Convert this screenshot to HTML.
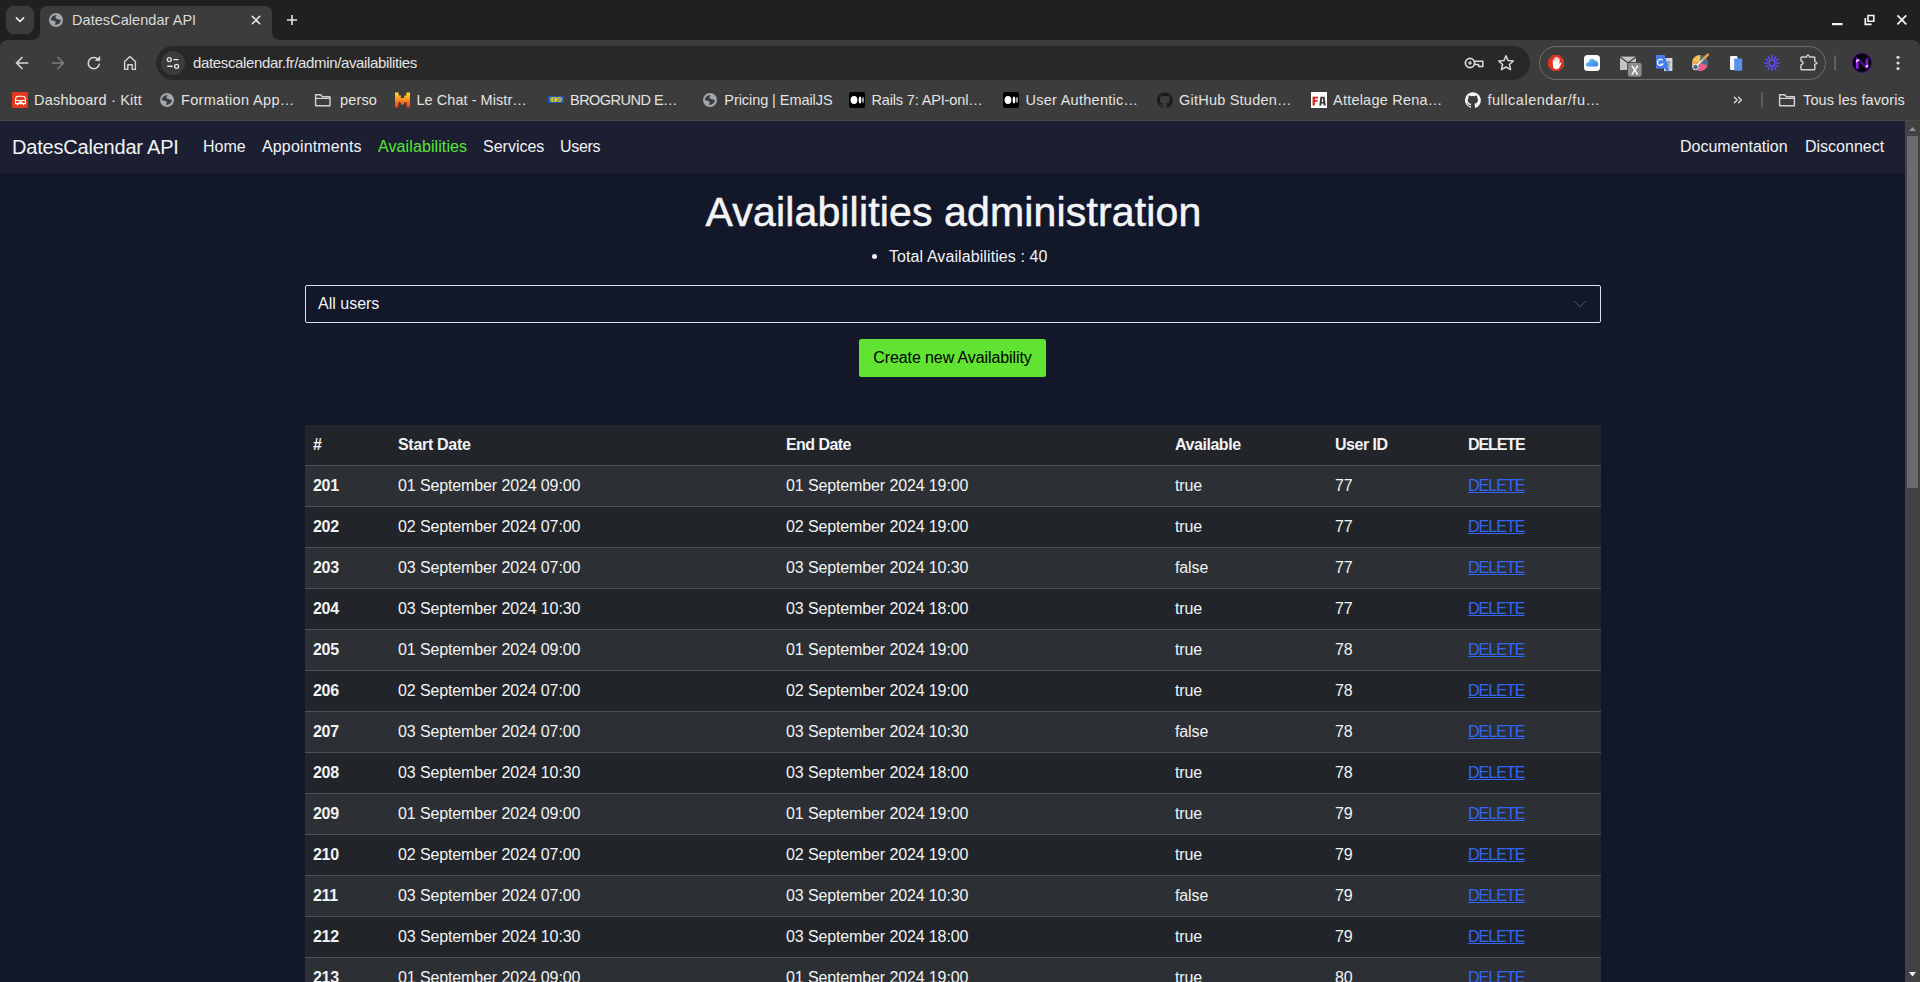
<!DOCTYPE html>
<html><head><meta charset="utf-8">
<style>
*{box-sizing:border-box;margin:0;padding:0}
html,body{width:1920px;height:982px;overflow:hidden;background:#1f2020;font-family:"Liberation Sans",sans-serif}
.abs{position:absolute}
.ct{position:absolute;line-height:20px;white-space:nowrap;font-family:"Liberation Sans",sans-serif}
#page{position:absolute;left:0;top:121px;width:1905px;height:861px;background:#12172a;overflow:hidden;color:#fff}
#nav{position:absolute;left:0;top:0;width:1905px;height:52px;background:#1c1f32}
#scroll{position:absolute;left:1905px;top:121px;width:15px;height:861px;background:#424242}
.nl{position:absolute;top:14px;font-size:16px;line-height:24px;color:#f1f3f5;white-space:nowrap}
.nl.brand{left:12px;top:12px;font-size:20px;line-height:28px;letter-spacing:-0.2px}
table{border-collapse:collapse;position:absolute;left:305px;top:304px;width:1296px;font-size:16px;color:#f1f3f5;table-layout:fixed}
td,th{height:41px;padding:0 7px 0 8px;text-align:left;border-bottom:1px solid #4d5154;white-space:nowrap;vertical-align:middle;letter-spacing:-0.12px}
th{font-weight:700;background:#212529;height:40px;letter-spacing:-0.3px}
tr:nth-child(odd) td{background:#2c3034}
tr:nth-child(even) td{background:#212529}
td:first-child{font-weight:700;letter-spacing:-0.3px}
a.del{color:#3466f6;text-decoration:underline;letter-spacing:-0.95px}
#title{position:absolute;left:1px;width:1905px;top:63px;text-align:center;font-size:41px;line-height:56px;color:#f3f4f6;-webkit-text-stroke:0.55px #f3f4f6;letter-spacing:0.15px}
#total{position:absolute;left:889px;top:124px;font-size:16px;line-height:24px;color:#f1f3f5;white-space:nowrap;letter-spacing:0.09px}
#total .bullet{position:absolute;left:-17px;top:9px;width:5px;height:5px;border-radius:50%;background:#f1f3f5}
#select{position:absolute;left:305px;top:164px;width:1296px;height:38px;border:1px solid #dee2e6;border-radius:2px;padding:0 12px;font-size:16px;line-height:36px;color:#f1f3f5}
#select .chev{position:absolute;right:13px;top:14px}
#btn{position:absolute;left:859px;top:218px;width:187px;height:38px;background:#61e332;border-radius:2.5px;text-align:center;font-size:16px;line-height:38px;color:#000;letter-spacing:-0.1px}

</style></head><body>

<svg class="abs" style="left:0;top:0" width="1920" height="121" viewBox="0 0 1920 121">
 <!-- tab strip chevron button -->
 <rect x="6" y="6" width="28" height="28" rx="8" fill="#3c3c3c"/>
 <path d="M16.4 17.9 L20 21.5 L23.6 17.9" fill="none" stroke="#f0f0f0" stroke-width="1.6" stroke-linecap="round" stroke-linejoin="round"/>
 <!-- active tab with flares -->
 <path d="M32 40 Q40 40 40 32 L40 14 Q40 6 48 6 L264 6 Q272 6 272 14 L272 32 Q272 40 280 40 Z" fill="#3c3c3c"/>
 <!-- globe -->
 <circle cx="56" cy="20" r="7" fill="#a3a8ae"/>
 <g transform="translate(0,0)"><circle cx="56" cy="20" r="5.6" fill="#a3a8ae"/><path d="M50.9 20.2 C51.0 17.5 52.5 15.3 56.9 15.0 C56.2 15.8 55.4 16.6 55.3 17.6 C55.4 18.8 57.5 19.2 58.6 19.4 C59.8 19.6 60.6 19.8 61.0 20.3 C60.6 22.8 58.4 24.8 55.2 25.1 C54.6 24.2 55.6 23.4 55.8 22.6 C56.0 21.2 54.0 20.6 52.8 20.4 Z" fill="#3c3c3c"/></g>
 <!-- tab close -->
 <path d="M252.4 16.4 L259.6 23.6 M259.6 16.4 L252.4 23.6" stroke="#e8e8e8" stroke-width="1.5" stroke-linecap="round"/>
 <!-- new tab plus -->
 <path d="M292 14.9 L292 25.1 M286.9 20 L297.1 20" stroke="#e8e8e8" stroke-width="1.6"/>
 <!-- window controls -->
 <rect x="1832" y="23" width="10.5" height="2.2" fill="#f5f5f5"/>
 <path d="M1868 15.5 h5.8 v5.8 h-5.8 Z" fill="none" stroke="#f5f5f5" stroke-width="1.6"/>
 <path d="M1865.3 18 v6.3 h6.3" fill="none" stroke="#f5f5f5" stroke-width="1.7"/>
 <path d="M1897.4 15.4 L1906.3 24.3 M1906.3 15.4 L1897.4 24.3" stroke="#eeeeee" stroke-width="1.9"/>

 <!-- toolbar -->
 <path d="M0 121 L0 48 Q0 40 8 40 L1912 40 Q1920 40 1920 48 L1920 121 Z" fill="#3c3c3c"/>
 <!-- back -->
 <path d="M27.6 63 L16.6 63 M22 57.5 L16.5 63 L22 68.5" fill="none" stroke="#d6d6d6" stroke-width="1.7" stroke-linecap="round" stroke-linejoin="round"/>
 <!-- forward -->
 <path d="M52.4 63 L63.4 63 M58 57.5 L63.5 63 L58 68.5" fill="none" stroke="#7c7c7c" stroke-width="1.7" stroke-linecap="round" stroke-linejoin="round"/>
 <!-- reload -->
 <path d="M98.6 60.2 A5.6 5.6 0 1 0 99.3 64.2" fill="none" stroke="#d6d6d6" stroke-width="1.6" stroke-linecap="round"/>
 <path d="M95.4 60.6 L99.8 60.6 L99.8 56.6 Z" fill="#d6d6d6" stroke="#d6d6d6" stroke-width="0.8" stroke-linejoin="round"/>
 <!-- home -->
 <path d="M124.6 69.4 L124.6 61.4 L130 56.6 L135.4 61.4 L135.4 69.4 L132.2 69.4 L132.2 64.8 L127.8 64.8 L127.8 69.4 Z" fill="none" stroke="#d6d6d6" stroke-width="1.4" stroke-linejoin="round"/>
 <!-- omnibox -->
 <rect x="156" y="46" width="1374" height="34" rx="17" fill="#282828"/>
 <circle cx="173" cy="63" r="12" fill="#3b3b3b"/>
 <circle cx="169.3" cy="59.6" r="2" fill="none" stroke="#e6e6e6" stroke-width="1.3"/>
 <path d="M173.3 59.6 H178.6 M167.3 66.3 H172.6" stroke="#e6e6e6" stroke-width="1.4"/>
 <circle cx="176.6" cy="66.3" r="2" fill="none" stroke="#e6e6e6" stroke-width="1.3"/>
 <!-- key -->
 <circle cx="1470" cy="63" r="4.6" fill="none" stroke="#dcdcdc" stroke-width="1.7"/>
 <circle cx="1470" cy="63" r="1.8" fill="#c8c8c8"/>
 <path d="M1474.4 61.3 H1482.8 V66.6 H1478.6 V64.6 H1474.4" fill="none" stroke="#dcdcdc" stroke-width="1.5" stroke-linejoin="round"/>
 <!-- star -->
 <path d="M1506 55.8 L1508.1 60.6 L1513.3 61 L1509.4 64.5 L1510.6 69.6 L1506 67 L1501.4 69.6 L1502.6 64.5 L1498.7 61 L1503.9 60.6 Z" fill="none" stroke="#d8d8d8" stroke-width="1.5" stroke-linejoin="round"/>
 <!-- extensions pill -->
 <rect x="1539.5" y="46.5" width="286" height="33" rx="16.5" fill="none" stroke="#6e6e6e" stroke-width="1"/>
 <!-- uBlock -->
 <path d="M1552.7 55 H1559.3 L1564 59.7 V66.3 L1559.3 71 H1552.7 L1548 66.3 V59.7 Z" fill="#d9341f"/>
 <path d="M1553.2 67.5 Q1552.6 64 1552.8 60.5 Q1553 59.4 1553.8 59.6 L1554.2 62.4 L1554.4 57.8 Q1554.8 56.8 1555.6 57.3 L1555.9 62 L1556.3 57 Q1556.9 56.3 1557.6 57.2 L1557.7 62 L1558.3 58.2 Q1559 57.6 1559.5 58.5 L1559.5 64 L1560.6 62.6 Q1561.5 62.2 1561.5 63.2 L1559 68.2 Q1558 69.4 1556 69.3 Q1554 69.2 1553.2 67.5 Z" fill="#ffffff"/>
 <!-- iCloud -->
 <rect x="1584" y="55" width="16" height="16" rx="3.5" fill="#fbfbfb"/>
 <defs><linearGradient id="cg" x1="0" y1="0" x2="1" y2="1"><stop offset="0" stop-color="#7cc8f8"/><stop offset="1" stop-color="#2f7ee8"/></linearGradient></defs><path d="M1588 66.6 Q1585.6 66.4 1585.8 64.3 Q1586 62.4 1588.2 62.4 Q1588.6 59.6 1591.2 58.8 Q1594 58.2 1595.2 60.8 Q1597.8 60.6 1598.2 63.4 Q1598.6 66.4 1595.8 66.6 Z" fill="url(#cg)"/>
 <!-- mail X -->
 <rect x="1620" y="56.6" width="16" height="13.4" fill="#c4c4c4"/>
 <path d="M1620 57 L1628 62.8 L1636 57" fill="none" stroke="#3c3c3c" stroke-width="1.2"/>
 <rect x="1627.5" y="62.5" width="14.5" height="14.5" rx="2.5" fill="#8e8e8e" stroke="#3c3c3c" stroke-width="0.8"/>
 <path d="M1631.8 65.6 L1637.8 74.6 M1637.8 65.6 L1631.8 74.6" stroke="#fafafa" stroke-width="1.6"/>
 <!-- google translate -->
 <rect x="1664" y="58" width="8.4" height="13" fill="#d8d8d8"/>
 <path d="M1666.5 62 L1670.5 62 M1668.5 61 L1668.5 62 M1667 62 Q1668 66 1671 68 M1670 62 Q1669 66 1666 68" stroke="#5e8a7e" stroke-width="0.8" fill="none"/>
 <path d="M1656 55 H1664.6 L1669.4 70.2 L1667 72 L1664.8 68.4 H1656 Z" fill="#4a7bef"/>
 <path d="M1662.6 60.2 A3 3 0 1 0 1663 64 H1660.6" fill="none" stroke="#ffffff" stroke-width="1.2"/>
 <!-- color picker -->
 <circle cx="1700" cy="63" r="8" fill="#4b6b8a"/>
 <path d="M1692.2 61.5 A8 8 0 0 1 1700.3 55 L1700 63 Z" fill="#f5c54a"/>
 <path d="M1692.2 61.5 L1700 63 L1694.8 69.1 A8 8 0 0 1 1692.2 61.5 Z" fill="#f0a860"/>
 <path d="M1700 63 L1707.6 65.5 A8 8 0 0 1 1698 70.8 Z" fill="#ec5d8a"/>
 <circle cx="1695.5" cy="67" r="2.8" fill="#4b6b8a" stroke="#f2f2f2" stroke-width="1"/>
 <path d="M1697.5 65 L1706.5 56" stroke="#f0f0f0" stroke-width="1.6" stroke-linecap="round"/>
 <path d="M1703.6 58.8 L1707.8 54.6" stroke="#f29b3a" stroke-width="2.6" stroke-linecap="round"/>
 <!-- pages -->
 <rect x="1730" y="56" width="7.5" height="14" rx="1.2" fill="#f6f6f6"/>
 <rect x="1734.2" y="58.4" width="8" height="12.4" rx="1.2" fill="#5b8ff0"/>
 <!-- sun/asterisk -->
 <g stroke="#5b4bf2" stroke-width="1.5" stroke-linecap="round">
  <circle cx="1772" cy="63" r="2.9" fill="none"/><path d="M1776.60 63.00 L1779.60 63.00"/><path d="M1775.98 65.30 L1778.58 66.80"/><path d="M1774.30 66.98 L1775.80 69.58"/><path d="M1772.00 67.60 L1772.00 70.60"/><path d="M1769.70 66.98 L1768.20 69.58"/><path d="M1768.02 65.30 L1765.42 66.80"/><path d="M1767.40 63.00 L1764.40 63.00"/><path d="M1768.02 60.70 L1765.42 59.20"/><path d="M1769.70 59.02 L1768.20 56.42"/><path d="M1772.00 58.40 L1772.00 55.40"/><path d="M1774.30 59.02 L1775.80 56.42"/><path d="M1775.98 60.70 L1778.58 59.20"/>
 </g>
 <!-- puzzle -->
 <path d="M1801.8 57 H1806.6 Q1806.9 55 1808 55 Q1809.1 55 1809.4 57 H1814 Q1814.8 57 1814.8 57.8 V61.6 Q1816.9 62.2 1816.9 63 Q1816.9 63.8 1814.8 64.4 V69 Q1814.8 69.8 1814 69.8 H1801.8 Q1801 69.8 1801 69 V65 Q1803.1 64.2 1803.1 62.9 Q1803.1 61.6 1801 60.8 V57.8 Q1801 57 1801.8 57 Z" fill="none" stroke="#cfcfcf" stroke-width="1.5" stroke-linejoin="round"/>
 <!-- separator -->
 <rect x="1834.2" y="55.5" width="1.6" height="15" fill="#6a6a6a"/>
 <!-- avatar -->
 <circle cx="1862" cy="62.8" r="9.7" fill="#050505" stroke="#4a0c90" stroke-width="1"/>
 <path d="M1855.9 57.1 L1858.6 59.6 L1858.6 68.8 L1855.9 68.8 Z" fill="#8e22f0"/>
 <path d="M1868.2 57.1 L1868.2 68.8 L1865.4 68.8 L1865.4 60 Z" fill="#7c1ae6"/>
 <path d="M1856.8 59.6 L1858.6 58 L1867.2 66.8 L1865.4 68.4 Z" fill="#4e0d92"/>
 <path d="M1855.9 60.4 L1858.4 59 L1859.6 60.2 L1855.9 62.4 Z" fill="#f0e8f8"/>
 <path d="M1865.2 66.2 L1868.2 64.4 L1868.2 66.4 L1866.2 67.6 Z" fill="#f4eefa"/>
 <!-- kebab -->
 <circle cx="1898" cy="57.3" r="1.6" fill="#dcdcdc"/>
 <circle cx="1898" cy="63" r="1.6" fill="#dcdcdc"/>
 <circle cx="1898" cy="68.6" r="1.6" fill="#dcdcdc"/>

 <!-- bookmark icons -->
 <rect x="12" y="92" width="16" height="16" fill="#e0391b"/>
 <path d="M15.6 103.6 V99 Q15.6 96.2 18.4 96.2 H22.4 Q25.4 96.2 25.4 99 V103.6 Z" fill="none" stroke="#ffffff" stroke-width="1.1"/>
 <path d="M16 100.5 H25 M17.5 104 V105.2 M23.5 104 V105.2" stroke="#ffffff" stroke-width="1.1"/>
 <ellipse cx="20.6" cy="102.3" rx="2.2" ry="1" fill="#ffffff"/>
 <!-- globe 2 -->
 <circle cx="167" cy="100" r="7" fill="#a3a8ae"/>
 <g transform="translate(111,80)"><circle cx="56" cy="20" r="5.6" fill="#a3a8ae"/><path d="M50.9 20.2 C51.0 17.5 52.5 15.3 56.9 15.0 C56.2 15.8 55.4 16.6 55.3 17.6 C55.4 18.8 57.5 19.2 58.6 19.4 C59.8 19.6 60.6 19.8 61.0 20.3 C60.6 22.8 58.4 24.8 55.2 25.1 C54.6 24.2 55.6 23.4 55.8 22.6 C56.0 21.2 54.0 20.6 52.8 20.4 Z" fill="#3c3c3c"/></g>
 <!-- folder -->
 <path d="M315.6 94.8 H320.6 L322.4 96.8 H330 V105.8 H315.6 Z" fill="none" stroke="#d2d2d2" stroke-width="1.4" stroke-linejoin="round"/>
 <path d="M315.6 98.4 H330" stroke="#d2d2d2" stroke-width="1.2"/>
 <!-- mistral M -->
 <defs><linearGradient id="mg" x1="0" y1="0" x2="0" y2="1"><stop offset="0" stop-color="#ffe02a"/><stop offset="0.5" stop-color="#ff8a1f"/><stop offset="1" stop-color="#ff2e17"/></linearGradient></defs>
 <path d="M395 92.5 H398.6 V95.5 H400.8 V98 H404.2 V95.5 H406.4 V92.5 H410 V107.5 H406.6 V102.3 H404.3 V104.6 H400.7 V102.3 H398.4 V107.5 H395 Z" fill="url(#mg)"/>
 <!-- ikea -->
 <rect x="548" y="96" width="16" height="7" fill="#1f57b8"/>
 <rect x="549.8" y="97.2" width="12.4" height="4.6" rx="2" fill="#f8dc1c"/>
 <path d="M551 98 V101 M552.8 98 L554.8 101 M554.8 98 L552.8 101 M556.4 98 H558 V101 H556.4 M559 101 L560.2 98 L561.4 101" stroke="#1f57b8" stroke-width="0.7" fill="none"/>
 <!-- pricing globe -->
 <circle cx="710" cy="100" r="7" fill="#a3a8ae"/>
 <g transform="translate(654,80)"><circle cx="56" cy="20" r="5.6" fill="#a3a8ae"/><path d="M50.9 20.2 C51.0 17.5 52.5 15.3 56.9 15.0 C56.2 15.8 55.4 16.6 55.3 17.6 C55.4 18.8 57.5 19.2 58.6 19.4 C59.8 19.6 60.6 19.8 61.0 20.3 C60.6 22.8 58.4 24.8 55.2 25.1 C54.6 24.2 55.6 23.4 55.8 22.6 C56.0 21.2 54.0 20.6 52.8 20.4 Z" fill="#3c3c3c"/></g>
 <!-- medium x2 -->
 <rect x="849" y="92" width="16" height="16" rx="2" fill="#000"/>
 <ellipse cx="854" cy="100" rx="3.4" ry="3.9" fill="#fff"/>
 <ellipse cx="860" cy="100" rx="1.3" ry="3.6" fill="#fff"/>
 <ellipse cx="863" cy="100" rx="0.8" ry="3.2" fill="#cfcfcf"/>
 <rect x="1003" y="92" width="16" height="16" rx="2" fill="#000"/>
 <ellipse cx="1008" cy="100" rx="3.4" ry="3.9" fill="#fff"/>
 <ellipse cx="1014" cy="100" rx="1.3" ry="3.6" fill="#fff"/>
 <ellipse cx="1017" cy="100" rx="0.8" ry="3.2" fill="#cfcfcf"/>
 <!-- github dark -->
 <g transform="translate(1157,92) scale(0.6667)"><path fill="#1b1b1b" d="M12 .3a12 12 0 0 0-3.8 23.4c.6.1.8-.3.8-.6v-2c-3.3.7-4-1.6-4-1.6-.6-1.4-1.4-1.8-1.4-1.8-1-.7.1-.7.1-.7 1.2.1 1.8 1.2 1.8 1.2 1 1.8 2.8 1.3 3.5 1 0-.8.4-1.3.7-1.6-2.7-.3-5.5-1.3-5.5-6 0-1.2.5-2.3 1.3-3.1-.2-.4-.6-1.6 0-3.2 0 0 1-.3 3.3 1.2a11.5 11.5 0 0 1 6 0c2.3-1.5 3.3-1.2 3.3-1.2.6 1.6.2 2.8 0 3.2.9.8 1.3 1.9 1.3 3.2 0 4.6-2.8 5.6-5.5 5.9.5.4.9 1 .9 2.2v3.3c0 .3.1.7.8.6A12 12 0 0 0 12 .3"/></g>
 <!-- FA -->
 <rect x="1311" y="92" width="16" height="16" fill="#fbfbfb"/>
 <path d="M1312.6 96.8 H1318 V98.6 H1314.9 V100 H1317.6 V101.8 H1314.9 V105.4 H1312.6 Z" fill="#d9261a"/>
 <path d="M1319.3 105.4 L1320.4 96.8 H1324.6 L1325.8 105.4 H1323.6 L1323.4 103.6 H1321.6 L1321.4 105.4 Z M1321.8 102 H1323.2 L1322.9 98.6 H1322.1 Z" fill="#3a3a3a"/>
 <!-- github white -->
 <g transform="translate(1465,92) scale(0.6667)"><path fill="#f5f5f5" d="M12 .3a12 12 0 0 0-3.8 23.4c.6.1.8-.3.8-.6v-2c-3.3.7-4-1.6-4-1.6-.6-1.4-1.4-1.8-1.4-1.8-1-.7.1-.7.1-.7 1.2.1 1.8 1.2 1.8 1.2 1 1.8 2.8 1.3 3.5 1 0-.8.4-1.3.7-1.6-2.7-.3-5.5-1.3-5.5-6 0-1.2.5-2.3 1.3-3.1-.2-.4-.6-1.6 0-3.2 0 0 1-.3 3.3 1.2a11.5 11.5 0 0 1 6 0c2.3-1.5 3.3-1.2 3.3-1.2.6 1.6.2 2.8 0 3.2.9.8 1.3 1.9 1.3 3.2 0 4.6-2.8 5.6-5.5 5.9.5.4.9 1 .9 2.2v3.3c0 .3.1.7.8.6A12 12 0 0 0 12 .3"/></g>
 <!-- chevrons >> -->
 <path d="M1734.4 97.2 L1737.2 100 L1734.4 102.8 M1738.6 97.2 L1741.4 100 L1738.6 102.8" fill="none" stroke="#e0e0e0" stroke-width="1.3" stroke-linecap="round" stroke-linejoin="round"/>
 <rect x="1761.2" y="92.4" width="1.6" height="15" fill="#6a6a6a"/>
 <!-- folder 2 -->
 <path d="M1779.6 94.8 H1784.6 L1786.4 96.8 H1794.4 V105.8 H1779.6 Z" fill="none" stroke="#d2d2d2" stroke-width="1.4" stroke-linejoin="round"/>
 <path d="M1779.6 98.4 H1794.4" stroke="#d2d2d2" stroke-width="1.2"/>
 <!-- separator line between chrome and page -->
 <rect x="0" y="120" width="1920" height="1" fill="#464747"/>
</svg>

<div class="ct" style="left:72.0px;top:9.98px;font-size:14.5px;letter-spacing:0.052px;color:#dadada">DatesCalendar API</div>
<div class="ct" style="left:193.0px;top:52.80px;font-size:15px;letter-spacing:-0.346px;color:#e3e3e3">datescalendar.fr/admin/availabilities</div>
<div class="ct" style="left:34.0px;top:89.98px;font-size:14.5px;letter-spacing:0.202px;color:#e3e3e3">Dashboard · Kitt</div>
<div class="ct" style="left:181.0px;top:89.98px;font-size:14.5px;letter-spacing:0.350px;color:#e3e3e3">Formation App…</div>
<div class="ct" style="left:340.0px;top:89.98px;font-size:14.5px;letter-spacing:0.146px;color:#e3e3e3">perso</div>
<div class="ct" style="left:416.5px;top:89.98px;font-size:14.5px;letter-spacing:0.045px;color:#e3e3e3">Le Chat - Mistr…</div>
<div class="ct" style="left:570.0px;top:89.98px;font-size:14.5px;letter-spacing:-0.526px;color:#e3e3e3">BROGRUND E…</div>
<div class="ct" style="left:724.3px;top:89.98px;font-size:14.5px;letter-spacing:-0.066px;color:#e3e3e3">Pricing | EmailJS</div>
<div class="ct" style="left:871.4px;top:89.98px;font-size:14.5px;letter-spacing:-0.143px;color:#e3e3e3">Rails 7: API-onl…</div>
<div class="ct" style="left:1025.4px;top:89.98px;font-size:14.5px;letter-spacing:0.280px;color:#e3e3e3">User Authentic…</div>
<div class="ct" style="left:1179.0px;top:89.98px;font-size:14.5px;letter-spacing:0.224px;color:#e3e3e3">GitHub Studen…</div>
<div class="ct" style="left:1333.0px;top:89.98px;font-size:14.5px;letter-spacing:0.221px;color:#e3e3e3">Attelage Rena…</div>
<div class="ct" style="left:1487.5px;top:89.98px;font-size:14.5px;letter-spacing:0.514px;color:#e3e3e3">fullcalendar/fu…</div>
<div class="ct" style="left:1803.0px;top:89.98px;font-size:14.5px;letter-spacing:0.129px;color:#e3e3e3">Tous les favoris</div>

<div id="page">
  <div id="nav">
    <div class="nl brand">DatesCalendar API</div>
    <div class="nl" style="left:203px">Home</div>
    <div class="nl" style="left:262px;letter-spacing:0.15px">Appointments</div>
    <div class="nl" style="left:378px;color:#55e833;letter-spacing:0.1px">Availabilities</div>
    <div class="nl" style="left:483px">Services</div>
    <div class="nl" style="left:560px;letter-spacing:-0.3px">Users</div>
    <div class="nl" style="left:1680px">Documentation</div>
    <div class="nl" style="left:1805px">Disconnect</div>
  </div>
  <div id="title">Availabilities administration</div>
  <div id="total"><span class="bullet"></span>Total Availabilities : 40</div>
  <div id="select">All users<svg class="chev" width="14" height="9" viewBox="0 0 14 9"><path d="M1.8 1.6 L7 6.8 L12.2 1.6" fill="none" stroke="#3a3f44" stroke-width="1.4" stroke-linecap="round" stroke-linejoin="round"/></svg></div>
  <div id="btn">Create new Availability</div>
  <table>
    <colgroup><col style="width:85px"><col style="width:388px"><col style="width:389px"><col style="width:160px"><col style="width:133px"><col style="width:141px"></colgroup>
    <thead><tr><th>#</th><th>Start Date</th><th style="letter-spacing:-0.55px">End Date</th><th style="letter-spacing:-0.45px">Available</th><th style="letter-spacing:-0.49px">User ID</th><th style="letter-spacing:-1.1px">DELETE</th></tr></thead>
    <tbody>
<tr><td>201</td><td>01 September 2024 09:00</td><td>01 September 2024 19:00</td><td>true</td><td>77</td><td><a class="del">DELETE</a></td></tr>
<tr><td>202</td><td>02 September 2024 07:00</td><td>02 September 2024 19:00</td><td>true</td><td>77</td><td><a class="del">DELETE</a></td></tr>
<tr><td>203</td><td>03 September 2024 07:00</td><td>03 September 2024 10:30</td><td>false</td><td>77</td><td><a class="del">DELETE</a></td></tr>
<tr><td>204</td><td>03 September 2024 10:30</td><td>03 September 2024 18:00</td><td>true</td><td>77</td><td><a class="del">DELETE</a></td></tr>
<tr><td>205</td><td>01 September 2024 09:00</td><td>01 September 2024 19:00</td><td>true</td><td>78</td><td><a class="del">DELETE</a></td></tr>
<tr><td>206</td><td>02 September 2024 07:00</td><td>02 September 2024 19:00</td><td>true</td><td>78</td><td><a class="del">DELETE</a></td></tr>
<tr><td>207</td><td>03 September 2024 07:00</td><td>03 September 2024 10:30</td><td>false</td><td>78</td><td><a class="del">DELETE</a></td></tr>
<tr><td>208</td><td>03 September 2024 10:30</td><td>03 September 2024 18:00</td><td>true</td><td>78</td><td><a class="del">DELETE</a></td></tr>
<tr><td>209</td><td>01 September 2024 09:00</td><td>01 September 2024 19:00</td><td>true</td><td>79</td><td><a class="del">DELETE</a></td></tr>
<tr><td>210</td><td>02 September 2024 07:00</td><td>02 September 2024 19:00</td><td>true</td><td>79</td><td><a class="del">DELETE</a></td></tr>
<tr><td>211</td><td>03 September 2024 07:00</td><td>03 September 2024 10:30</td><td>false</td><td>79</td><td><a class="del">DELETE</a></td></tr>
<tr><td>212</td><td>03 September 2024 10:30</td><td>03 September 2024 18:00</td><td>true</td><td>79</td><td><a class="del">DELETE</a></td></tr>
<tr><td>213</td><td>01 September 2024 09:00</td><td>01 September 2024 19:00</td><td>true</td><td>80</td><td><a class="del">DELETE</a></td></tr>
    </tbody>
  </table>
</div>
<div id="scroll">
  <svg width="15" height="861" viewBox="0 0 15 861" style="position:absolute;left:0;top:0">
    <path d="M4 10 L7.5 6 L11 10 Z" fill="#8f8f8f"/>
    <rect x="2" y="15" width="11" height="352" fill="#6b6b6b"/>
    <path d="M4 851 L7.5 855.5 L11 851 Z" fill="#f0f0f0"/>
  </svg>
</div>
</body></html>
